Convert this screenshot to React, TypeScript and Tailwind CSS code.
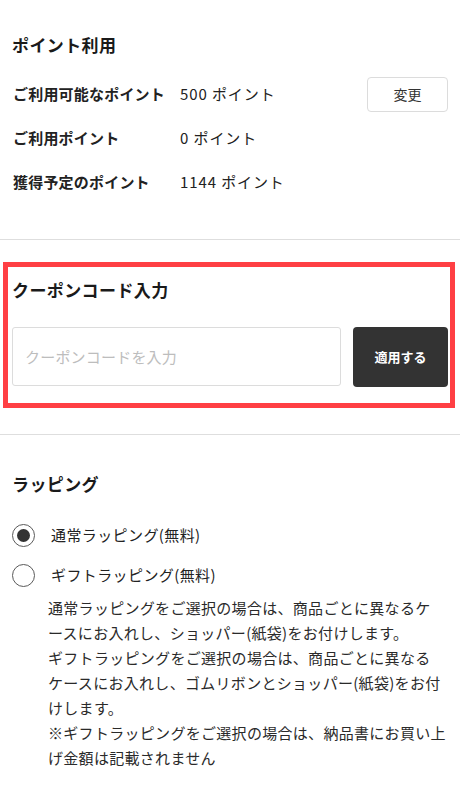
import React from "react";

const font = { fontFamily: '"Noto Sans CJK JP", "Noto Sans", sans-serif' };

function Row({ label, value, action }: { label: string; value: string; action?: boolean }) {
  return (
    <div className="flex h-[44px] items-center">
      <div className="w-[168px] pl-px text-[15px] font-bold text-[#222] tracking-[0.2px]">{label}</div>
      <div className="flex-1 text-[15px] text-[#222] tracking-[0.9px]">{value}</div>
      {action && (
        <button className="h-[35px] w-[81px] rounded-[4px] border border-[#dcdcdc] bg-white text-[14px] text-[#333]">
          変更
        </button>
      )}
    </div>
  );
}

function Radio({ checked, label }: { checked?: boolean; label: string }) {
  return (
    <div className="flex h-[40px] items-center">
      <div className="flex h-[23px] w-[23px] items-center justify-center rounded-full border-[1.5px] border-[#5a5a5a] bg-white">
        {checked && <div className="h-[13px] w-[13px] rounded-full bg-[#333]" />}
      </div>
      <div className="ml-[16px] text-[15px] text-[#222] tracking-[0.4px]">{label}</div>
    </div>
  );
}

export default function App() {
  return (
    <div style={font} className="w-[460px] min-h-[786px] bg-white text-[#222]">
      <section className="px-3 pt-[33px] pb-[35px]">
        <h2 className="h-[24px] text-[17px] font-bold leading-[24px] tracking-[0.4px] text-[#1a1a1a]">ポイント利用</h2>
        <div className="mt-[15px]">
          <Row label="ご利用可能なポイント" value="500 ポイント" action />
          <Row label="ご利用ポイント" value="0 ポイント" />
          <Row label="獲得予定のポイント" value="1144 ポイント" />
        </div>
      </section>
      <div className="h-px bg-[#dedede]" />
      <section className="mt-[22px] ml-[3px] w-[452px] border-[5px] border-[#ff3f44] pl-1 pr-[2px] pt-[11px] pb-[16px]">
        <h2 className="h-[24px] text-[17px] font-bold leading-[24px] tracking-[0.4px] text-[#1a1a1a]">クーポンコード入力</h2>
        <div className="mt-[25px] flex gap-3">
          <input
            placeholder="クーポンコードを入力"
            className="h-[59px] min-w-0 flex-1 rounded-[3px] border border-[#dcdcdc] px-3 text-[15px] tracking-[0.2px] text-[#222] placeholder:text-[#bdbdbd] outline-none"
            style={font}
          />
          <button className="h-[60px] w-[95px] rounded-[4px] bg-[#333333] text-[13px] font-bold text-white">
            適用する
          </button>
        </div>
      </section>
      <div className="mt-[26px] h-px bg-[#dedede]" />
      <section className="px-3 pt-[37px] pb-4">
        <h2 className="h-[24px] text-[17px] font-bold leading-[24px] tracking-[0.4px] text-[#1a1a1a]">ラッピング</h2>
        <div className="mt-[19px]">
          <Radio checked label="通常ラッピング(無料)" />
          <Radio label="ギフトラッピング(無料)" />
        </div>
        <p className="mt-0 pl-[36px] text-[15px] leading-[25px] tracking-[0.3px] text-[#2a2a2a] whitespace-nowrap">
          通常ラッピングをご選択の場合は、商品ごとに異なるケ<br />
          ースにお入れし、ショッパー(紙袋)をお付けします。<br />
          ギフトラッピングをご選択の場合は、商品ごとに異なる<br />
          ケースにお入れし、ゴムリボンとショッパー(紙袋)をお付<br />
          けします。<br />
          ※ギフトラッピングをご選択の場合は、納品書にお買い上<br />
          げ金額は記載されません
        </p>
      </section>
    </div>
  );
}
